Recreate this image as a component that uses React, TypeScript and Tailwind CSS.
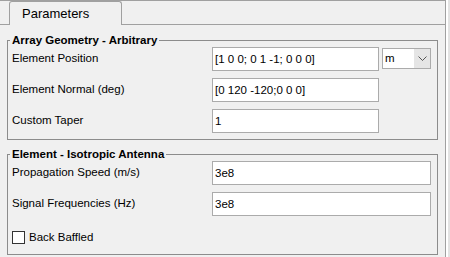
const font = { fontFamily: '"Liberation Sans", Arial, sans-serif' };

function Field({ label, value, wide = true }: { label: string; value: string; wide?: boolean }) {
  return (
    <div className="flex items-center h-[24px]">
      <div className="w-[202px] pl-[2px] text-[11.5px] text-black leading-none">{label}</div>
      <input
        defaultValue={value}
        className={`${wide ? "w-[219px]" : "w-[167px]"} h-[24px] border border-[#ababab] bg-white px-[2px] text-[11.5px] text-black outline-none`}
        style={font}
      />
    </div>
  );
}

export default function App() {
  return (
    <div className="w-[450px] h-[257px] overflow-hidden bg-[#f0f0f0] flex" style={font}>
      <div className="w-[446px] flex flex-col border-r border-[#a0a0a0] border-t">
        <div className="flex h-[24px]">
          <div className="w-[9px] border-b border-[#a0a0a0]" />
          <div className="w-[113px] h-[24px] border border-b-0 border-[#a0a0a0] rounded-t-[3px] pl-[12px] pt-[5px] text-[13px] leading-none text-black">
            Parameters
          </div>
          <div className="flex-1 border-b border-[#a0a0a0]" />
        </div>
        <div className="pl-[7px] pr-[7px] pt-[10px]">
          <fieldset className="border border-[#8c8c8c] pl-[2px] pr-[3px] pb-[6px]">
            <legend className="px-[2px] text-[11.5px] font-bold leading-none text-black">
              Array Geometry - Arbitrary
            </legend>
            <div className="flex flex-col gap-[7px]">
              <div className="flex items-center">
                <Field label="Element Position" value="[1 0 0; 0 1 -1; 0 0 0]" wide={false} />
                <div className="ml-[3px] w-[49px] h-[21px] border border-[#ababab] bg-white flex items-center">
                  <span className="flex-1 pl-[2px] text-[11.5px] leading-none text-black">m</span>
                  <span className="w-[16px] h-full bg-[#e5e5e5] flex items-center justify-center">
                    <svg width="9" height="5" viewBox="0 0 9 5">
                      <path d="M0.5 0.5 L4.5 4.5 L8.5 0.5" fill="none" stroke="#555" strokeWidth="1" />
                    </svg>
                  </span>
                </div>
              </div>
              <Field label="Element Normal (deg)" value="[0 120 -120;0 0 0]" wide={false} />
              <Field label="Custom Taper" value="1" wide={false} />
            </div>
          </fieldset>
          <fieldset className="mt-[9px] border border-[#8c8c8c] pl-[2px] pr-[3px] pb-[10px]">
            <legend className="px-[2px] text-[11.5px] font-bold leading-none text-black">
              Element - Isotropic Antenna
            </legend>
            <div className="flex flex-col gap-[7px] pt-[1px]">
              <Field label="Propagation Speed (m/s)" value="3e8" />
              <Field label="Signal Frequencies (Hz)" value="3e8" />
              <div className="flex items-center gap-[4px] mt-[8px] pl-[2px]">
                <span className="w-[13px] h-[13px] border border-[#333] bg-white" />
                <span className="text-[11.5px] leading-none text-black">Back Baffled</span>
              </div>
            </div>
          </fieldset>
        </div>
      </div>
      <div className="w-[2px] bg-white" />
      <div className="w-[2px] bg-[#e3e3e3]" />
    </div>
  );
}
